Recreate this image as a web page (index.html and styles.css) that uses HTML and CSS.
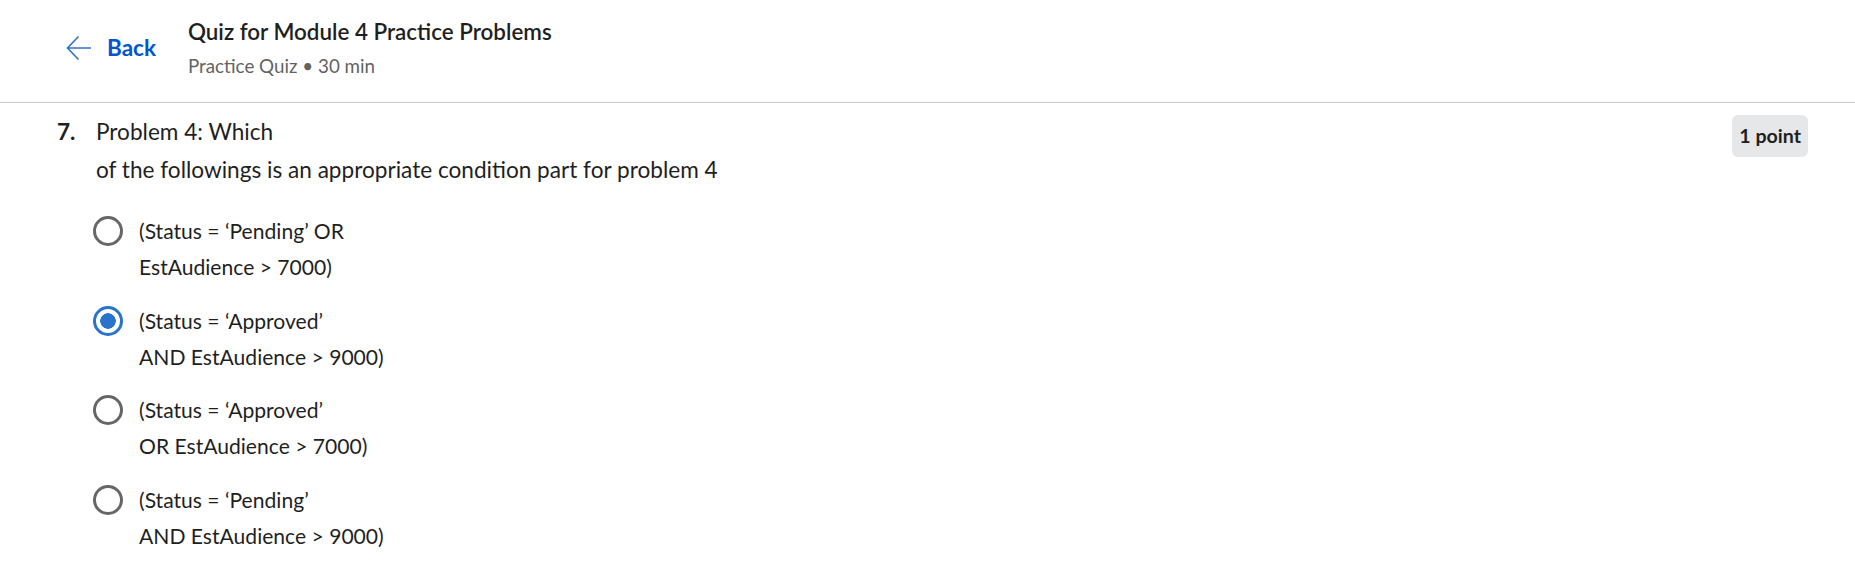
FILE: index.html
```html
<!DOCTYPE html>
<html lang="en">
<head>
<meta charset="utf-8">
<title>Quiz for Module 4 Practice Problems</title>
<link rel="stylesheet" href="styles.css">
</head>
<body>
<header class="top">
  <a class="back" href="#">
    <svg class="back-icon" viewBox="0 0 26 26" width="26" height="26" aria-hidden="true">
      <path d="M25 13H2M12.5 1.5L1.5 13l11 11.5" fill="none" stroke="#2a73cc" stroke-width="1.6"/>
    </svg>
    <span>Back</span>
  </a>
  <div class="title-block">
    <h1 class="title">Quiz for Module 4 Practice Problems</h1>
    <div class="sub">Practice Quiz • 30 min</div>
  </div>
</header>
<main class="question">
  <div class="q-head">
    <span class="q-num">7.</span>
    <div class="q-text">Problem 4: Which<br>of the followings is an appropriate condition part for problem 4</div>
    <span class="badge">1 point</span>
  </div>
  <div class="options">
    <label class="opt"><span class="radio"></span><span class="opt-text">(Status = ‘Pending’ OR<br>EstAudience &gt; 7000)</span></label>
    <label class="opt"><span class="radio checked"></span><span class="opt-text">(Status = ‘Approved’<br>AND EstAudience &gt; 9000)</span></label>
    <label class="opt"><span class="radio"></span><span class="opt-text">(Status = ‘Approved’<br>OR EstAudience &gt; 7000)</span></label>
    <label class="opt"><span class="radio"></span><span class="opt-text">(Status = ‘Pending’<br>AND EstAudience &gt; 9000)</span></label>
  </div>
</main>
</body>
</html>
```
FILE: styles.css
```css
* { box-sizing: border-box; }
body { margin: 0; font-family: "Lato", sans-serif; color: #1f1f1f; background: #fff; }
.top { height: 103px; border-bottom: 1px solid #c8c8c8; display: flex; align-items: flex-start; padding: 17px 0 0 66px; }
.back { display: flex; align-items: center; gap: 15px; color: #0056d2; text-decoration: none; font-weight: 700; font-size: 22.5px; margin-top: 17px; }
.back-icon { display: block; }
.title-block { margin-left: 32px; }
.title { margin: 0; font-size: 22.4px; font-weight: 600; line-height: 30px; }
.sub { font-size: 18.8px; color: #636363; line-height: 30px; margin-top: 4px; }
.question { padding: 10px 47px 0 57px; }
.q-head { display: flex; align-items: flex-start; font-size: 22.6px; line-height: 38px; }
.q-num { font-weight: 700; width: 39px; }
.q-text { flex: 1; }
.badge { background: #e5e7e8; border-radius: 6px; font-weight: 700; font-size: 19.6px; line-height: 42px; padding: 0 7px; margin-top: 2px; }
.options { margin-top: 24px; padding-left: 36px; display: flex; flex-direction: column; gap: 17.5px; }
.opt { display: flex; align-items: flex-start; gap: 16px; font-size: 21.1px; line-height: 36px; }
.radio { width: 30px; height: 30px; border: 3px solid #666; border-radius: 50%; margin-top: 3px; flex: none; }
.radio.checked { border-color: #2a73cc; background: radial-gradient(circle, #2a73cc 0 7.5px, #fff 8px); }
```
